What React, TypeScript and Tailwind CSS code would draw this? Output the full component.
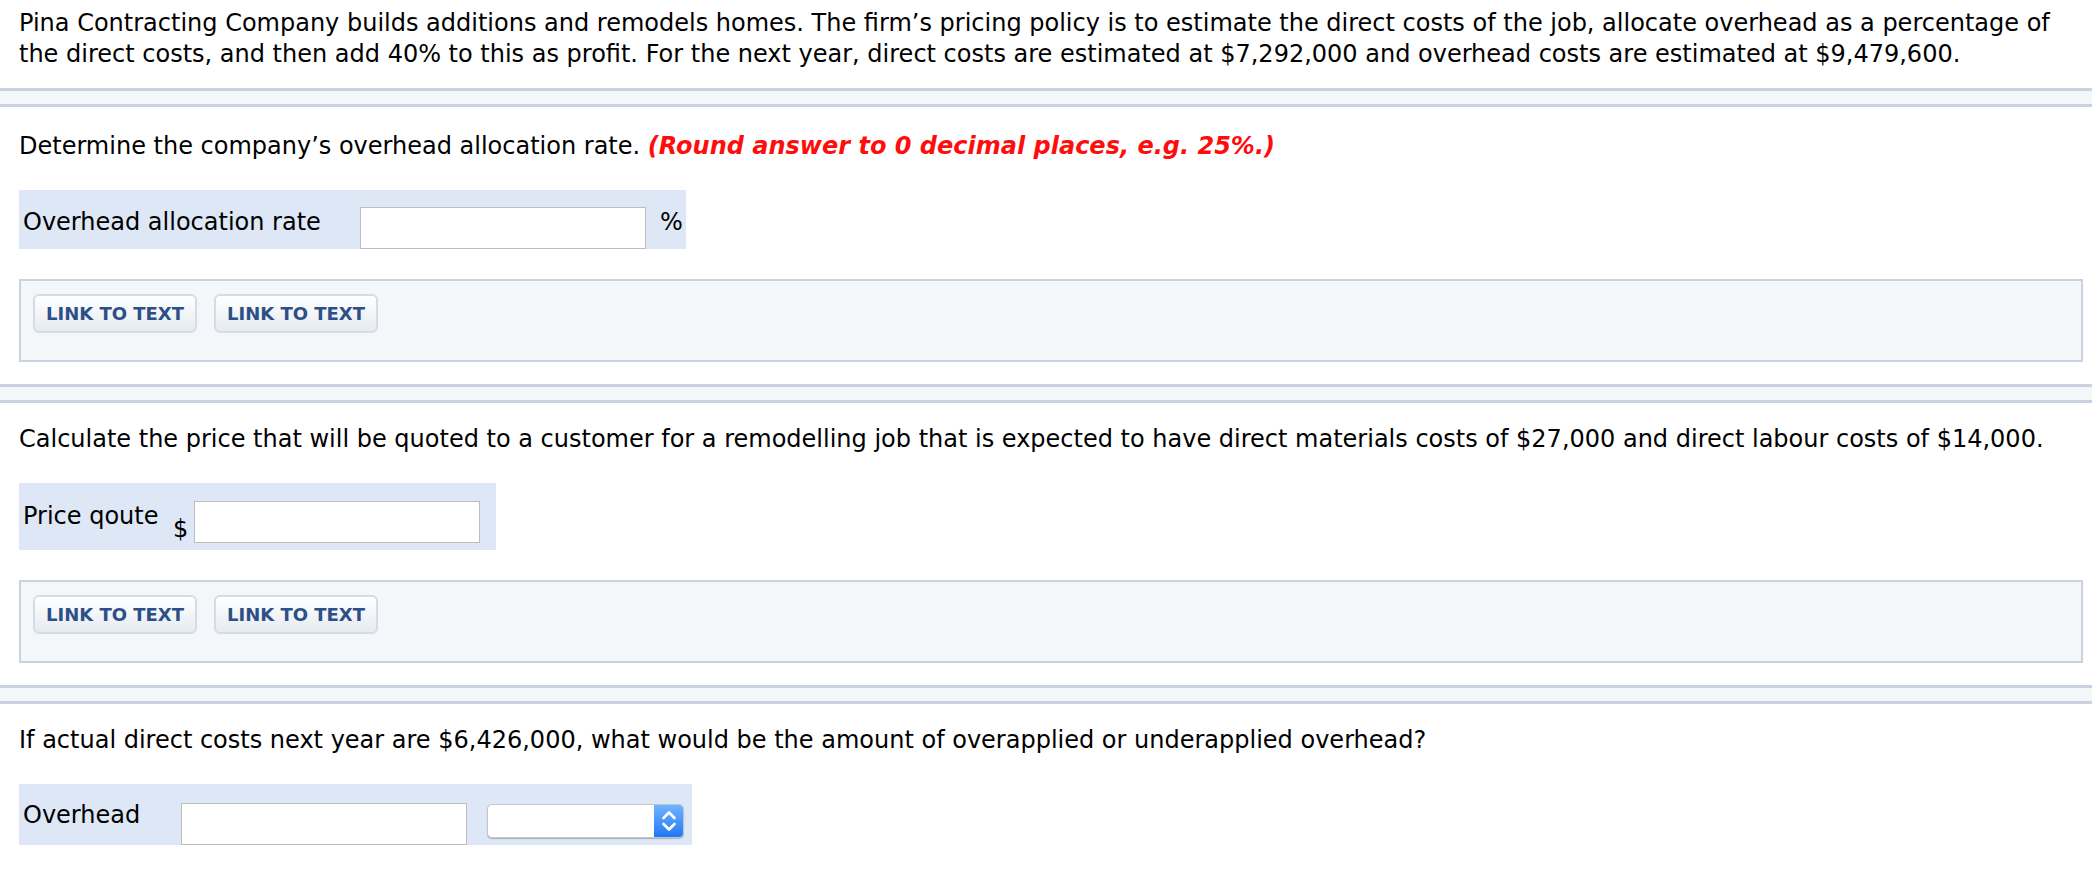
import type { ReactNode } from 'react'

function Divider({ className = '' }: { className?: string }) {
	return <div className={`h-[19px] border-y-[3px] border-[#c9d2de] bg-[#f4f7fa] ${className}`} />
}

function TextInput({ className = '' }: { className?: string }) {
	return <input type="text" className={`h-[42px] w-[286px] border border-[#bdbdbd] bg-white outline-none ${className}`} />
}

function LinkButtons() {
	return (
		<div className="mr-[9px] mt-[30px] flex gap-[17px] border-2 border-[#c9d2de] bg-[#f4f7fa] pl-3 pt-[13px] pb-[27px]">
			{['a', 'b'].map((k) => (
				<button
					key={k}
					type="button"
					className="h-[39px] w-[164px] rounded-[6px] border-2 border-[#d5dce5] bg-linear-to-b from-white to-[#e6ebf1] text-[18px] font-bold text-[#2c4f87]"
				>
					LINK TO TEXT
				</button>
			))}
		</div>
	)
}

function SelectBox() {
	return (
		<div className="mt-1 flex h-[34px] w-[197px] overflow-hidden rounded-[5px] border border-[#c3c7cc] bg-white shadow-[0_1px_1px_rgba(0,0,0,0.25)]">
			<div className="flex-1" />
			<div className="flex w-[29px] items-center justify-center bg-linear-to-b from-[#6fb4ff] to-[#1c78f5]">
				<svg width="16" height="26" viewBox="0 0 16 26" fill="none" stroke="white" strokeWidth="2.6" strokeLinecap="round" strokeLinejoin="round">
					<path d="M2.5 10 L8 4.5 L13.5 10" />
					<path d="M2.5 16 L8 21.5 L13.5 16" />
				</svg>
			</div>
		</div>
	)
}

function Question({ children, className = 'mt-[21px]' }: { children: ReactNode; className?: string }) {
	return <p className={className}>{children}</p>
}

export default function App() {
	return (
		<div className="min-h-screen bg-white font-['DejaVu_Sans',Verdana,sans-serif] text-[24px] leading-[31px] text-black">
			<p className="pl-[19px] pr-[4px] pt-2">
				Pina Contracting Company builds additions and remodels homes. The firm’s pricing policy is to estimate the direct costs of the job, allocate overhead as a percentage of the direct costs, and then add 40% to this as profit. For the next year, direct costs are estimated at $7,292,000 and overhead costs are estimated at $9,479,600.
			</p>

			<Divider className="mt-[18px]" />

			<section className="pl-[19px]">
				<Question className="mt-[24px]">
					Determine the company’s overhead allocation rate.{' '}
					<span className="font-bold italic text-[#ff0d0d]">(Round answer to 0 decimal places, e.g. 25%.)</span>
				</Question>
				<div className="mt-[28px] flex w-fit items-start bg-[#dde7f5] pl-1 pr-[3px] pt-[17px]">
					<span className="w-[337px]">Overhead allocation rate</span>
					<TextInput />
					<span className="ml-[14px]">%</span>
				</div>
				<LinkButtons />
			</section>

			<Divider className="mt-[22px]" />

			<section className="pl-[19px]">
				<Question>
					Calculate the price that will be quoted to a customer for a remodelling job that is expected to have direct materials costs of $27,000 and direct labour costs of $14,000.
				</Question>
				<div className="mt-[28px] flex w-fit items-start bg-[#dde7f5] pb-[5px] pl-1 pr-4 pt-[18px]">
					<span className="w-[150px]">Price qoute</span>
					<span className="mt-[13px]">$</span>
					<TextInput className="ml-[6px]" />
				</div>
				<LinkButtons />
			</section>

			<Divider className="mt-[22px]" />

			<section className="pl-[19px]">
				<Question>
					If actual direct costs next year are $6,426,000, what would be the amount of overapplied or underapplied overhead?
				</Question>
				<div className="mt-[28px] flex w-fit items-start bg-[#dde7f5] pl-1 pr-2 pt-4">
					<span className="w-[158px]">Overhead</span>
					<TextInput className="mt-[3px]" />
					<div className="ml-5">
						<SelectBox />
					</div>
				</div>
			</section>
		</div>
	)
}
